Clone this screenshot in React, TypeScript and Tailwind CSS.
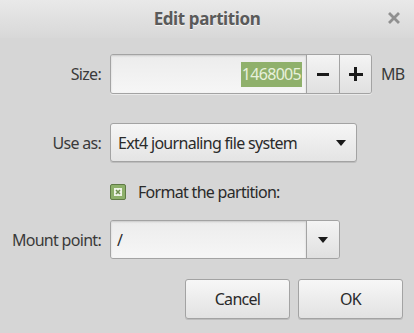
import React from "react";

const font = { fontFamily: '"Noto Sans", "Open Sans", sans-serif' };

function Arrow() {
  return (
    <svg width="10" height="6" viewBox="0 0 10 6">
      <path d="M0 0 H10 L5 6 Z" fill="#1a1a1a" />
    </svg>
  );
}

export default function App() {
  return (
    <div
      className="w-[414px] h-[333px] bg-[#d6d6d6] text-[#333] overflow-hidden flex flex-col"
      style={font}
    >
      <div className="relative h-[38px] bg-gradient-to-b from-[#e9e9e9] to-[#d8d8d8] flex items-center justify-center">
        <span className="text-[17px] font-bold text-[#5a5a5a] tracking-[-0.4px] [text-shadow:0_1px_0_#f4f4f4]">
          Edit partition
        </span>
        <svg
          className="absolute right-[13px] top-[11px]"
          width="14"
          height="14"
          viewBox="0 0 14 14"
        >
          <path d="M3 3 L11 11 M11 3 L3 11" stroke="#909090" strokeWidth="2.8" strokeLinecap="square" />
        </svg>
      </div>

      <div className="grid grid-cols-[101px_auto] gap-x-[9px] items-center mt-[16px] text-[16px] tracking-[-0.7px]">
        <span className="text-right text-[#3a3a3a]">Size:</span>
        <div className="flex items-center">
          <div className="flex h-[40px] w-[262px] rounded-[3px] border border-[#a3a3a3] shadow-[0_1px_0_#eaeaea] overflow-hidden">
            <div className="flex-1 flex items-center justify-end pr-[4px] bg-gradient-to-b from-[#ececec] to-[#f6f6f6] shadow-[inset_0_1px_2px_rgba(0,0,0,0.15)]">
              <span className="bg-[#8fb06b] text-[#e8f0dc] h-[25px] flex items-center px-[1px]">1468005</span>
            </div>
            <div className="w-[33px] border-l border-[#a3a3a3] bg-gradient-to-b from-[#f4f4f4] to-[#e0e0e0] flex items-center justify-center">
              <span className="block w-[12px] h-[3px] bg-[#1a1a1a]" />
            </div>
            <div className="w-[32px] border-l border-[#a3a3a3] bg-gradient-to-b from-[#f4f4f4] to-[#e0e0e0] flex items-center justify-center relative">
              <span className="block w-[14px] h-[3px] bg-[#1a1a1a]" />
              <span className="absolute block w-[3px] h-[14px] bg-[#1a1a1a]" />
            </div>
          </div>
          <span className="ml-[9px] text-[#3a3a3a]">MB</span>
        </div>

        <span className="text-right text-[#3a3a3a] mt-[29px]">Use as:</span>
        <div className="mt-[29px] flex items-center justify-between w-[247px] h-[39px] rounded-[3px] border border-[#a3a3a3] bg-gradient-to-b from-[#f6f6f6] to-[#e4e4e4] shadow-[0_1px_0_#bdbdbd] pl-[7px] pr-[10px]">
          <span className="text-[#2a2a2a]">Ext4 journaling file system</span>
          <Arrow />
        </div>

        <span />
        <div className="mt-[22px] flex items-center h-[16px]">
          <span className="w-[16px] h-[16px] rounded-[2px] border border-[#5f7a45] bg-[#8db06a] flex items-center justify-center">
            <svg width="10" height="10" viewBox="0 0 10 10">
              <rect x="1" y="1" width="8" height="8" fill="#eef3e6" />
              <path d="M3 3 L7 7 M7 3 L3 7" stroke="#6e8f4e" strokeWidth="1.6" />
            </svg>
          </span>
          <span className="ml-[12px] text-[#2a2a2a]">Format the partition:</span>
        </div>

        <span className="text-right text-[#3a3a3a] mt-[20px]">Mount point:</span>
        <div className="mt-[20px] flex h-[39px] w-[230px] rounded-[3px] border border-[#a3a3a3] overflow-hidden">
          <div className="flex-1 flex items-center pl-[6px] bg-gradient-to-b from-[#ececec] to-[#f6f6f6] shadow-[inset_0_1px_2px_rgba(0,0,0,0.15)]">
            <span className="text-[#2a2a2a]">/</span>
          </div>
          <div className="w-[33px] border-l border-[#a3a3a3] bg-gradient-to-b from-[#f4f4f4] to-[#e0e0e0] flex items-center justify-center">
            <Arrow />
          </div>
        </div>
      </div>

      <div className="flex justify-end gap-[8px] pr-[11px] mt-[20px] text-[16px] tracking-[-0.7px]">
        <button className="w-[105px] h-[40px] rounded-[3px] border border-[#a3a3a3] bg-gradient-to-b from-[#f7f7f7] to-[#e2e2e2] shadow-[0_1px_0_#bdbdbd] text-[#2a2a2a]">
          Cancel
        </button>
        <button className="w-[105px] h-[40px] rounded-[3px] border border-[#a3a3a3] bg-gradient-to-b from-[#f7f7f7] to-[#e2e2e2] shadow-[0_1px_0_#bdbdbd] text-[#2a2a2a]">
          OK
        </button>
      </div>
    </div>
  );
}
